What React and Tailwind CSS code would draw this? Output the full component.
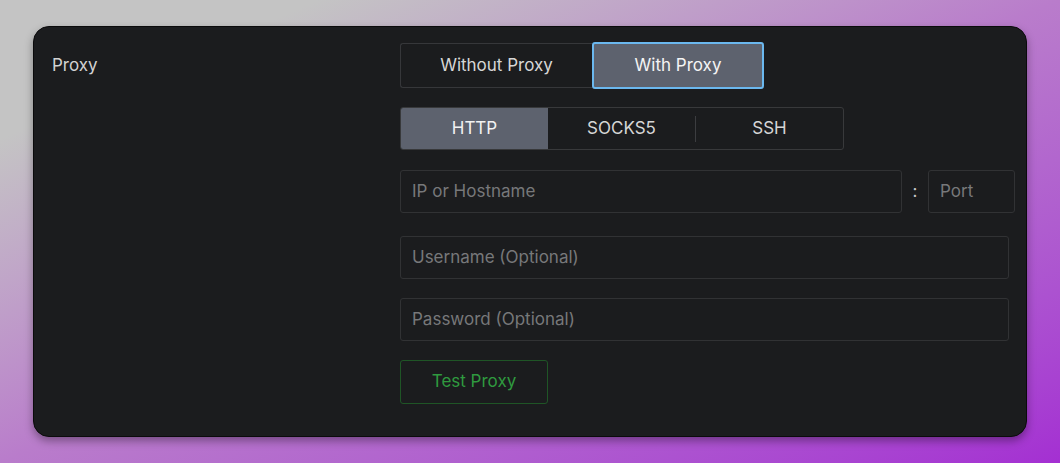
import React from "react";

// Proxy settings card on a grey→purple backdrop.
function Segment({ items, active, className = "" }) {
  return (
    <div className={`flex h-[43px] border border-[#38393b] rounded-[3px] overflow-hidden ${className}`}>
      {items.map((item, i) => (
        <React.Fragment key={item}>
          {i > 0 && item !== items[active] && items[i - 1] !== items[active] && (
            <div className="w-px h-[26px] self-center bg-[#3c3d40]" />
          )}
          <div
            className={`flex-1 flex items-center justify-center text-[17px] ${
              i === active ? "bg-[#5d626e] text-[#f2f2f2]" : "text-[#d6d6d6]"
            }`}
          >
            {item}
          </div>
        </React.Fragment>
      ))}
    </div>
  );
}

function Field({ placeholder, className = "" }) {
  return (
    <div
      className={`h-[43px] border border-[#313234] rounded-[3px] flex items-center px-[11px] text-[17px] text-[#77787a] ${className}`}
    >
      {placeholder}
    </div>
  );
}

export default function App() {
  return (
    <div
      className="w-[1060px] h-[463px] pt-[26px] pl-[33px] bg-linear-to-br from-[#c4c4c4] from-15% via-[#b97ccb] via-50% to-[#a42fd2]"
      style={{ fontFamily: "Inter, 'Noto Sans', sans-serif" }}
    >
      <div className="w-[994px] h-[411px] bg-[#1b1c1e] border border-[#0b0b0c] rounded-[16px] shadow-[0_4px_8px_rgba(0,0,0,0.35)] flex pt-[15px]">
        {/* Label */}
        <div className="w-[366px] pl-[18px] h-[47px] flex items-center text-[17px] text-[#d2d2d2]">
          Proxy
        </div>

        {/* Controls */}
        <div className="flex flex-col">
          <div className="flex h-[47px]">
            <div className="w-[192px] border border-[#36373a] border-r-0 rounded-l-[3px] flex items-center justify-center text-[17px] text-[#d6d6d6] my-[1px]">
              Without Proxy
            </div>
            <div className="w-[172px] border-2 border-[#6bb8ef] rounded-[3px] bg-[#5d626e] flex items-center justify-center text-[17px] text-[#f4f4f4]">
              With Proxy
            </div>
          </div>

          <Segment items={["HTTP", "SOCKS5", "SSH"]} active={0} className="w-[444px] mt-[18px]" />

          <div className="flex items-center mt-[20px]">
            <Field placeholder="IP or Hostname" className="w-[502px] h-[42px]" />
            <span className="w-[26px] text-center text-[17px] text-[#c8c8c8]">:</span>
            <Field placeholder="Port" className="w-[87px] h-[42px]" />
          </div>

          <Field placeholder="Username (Optional)" className="w-[609px] mt-[23px]" />
          <Field placeholder="Password (Optional)" className="w-[609px] mt-[19px]" />

          <div className="w-[148px] h-[44px] mt-[19px] border border-[#1f5526] rounded-[3px] flex items-center justify-center text-[17px] text-[#2f9a3f]">
            Test Proxy
          </div>
        </div>
      </div>
    </div>
  );
}
